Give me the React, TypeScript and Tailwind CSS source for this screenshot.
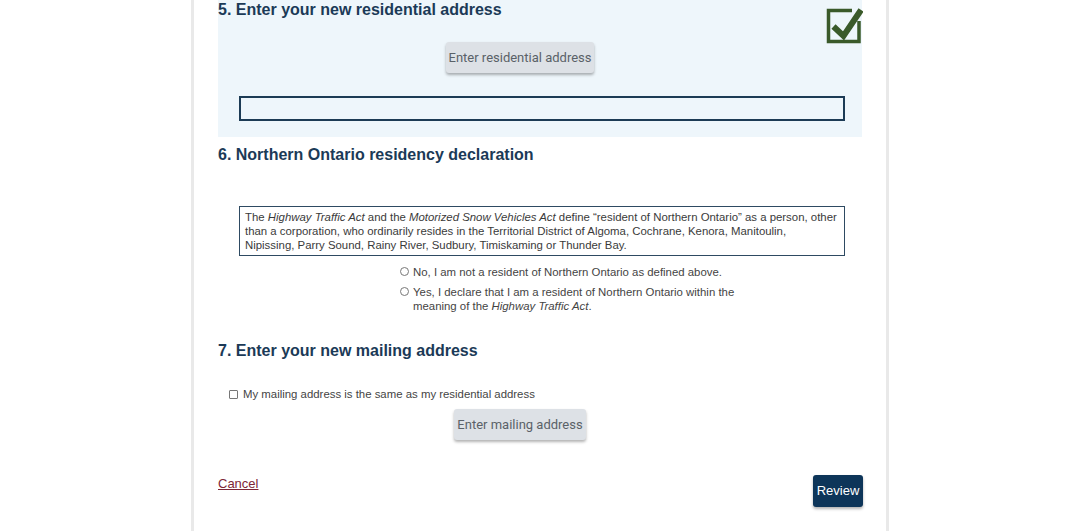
import type { ReactNode } from "react";

const sans = "font-['Liberation_Sans',Arial,sans-serif]";

const Heading = ({ children }: { children: ReactNode }) => (
  <h2 className={`${sans} text-[16px] leading-[20px] font-bold text-[#1b3a57]`}>{children}</h2>
);

const GreyButton = ({ label, className }: { label: string; className: string }) => (
  <button
    className={`${className} h-[31px] rounded-[3px] bg-[#dde1e6] text-[13px] text-[#5a6168] font-['Roboto',sans-serif] shadow-[0_2px_3px_rgba(0,0,0,0.3)]`}
  >
    {label}
  </button>
);

const CheckMark = () => (
  <svg width="38" height="38" viewBox="0 0 38 38" className="shrink-0">
    <path d="M27 3.5H3.5V34.5H34V14" fill="none" stroke="#3a5a2a" strokeWidth="3.5" />
    <path d="M8.5 19.5L18.5 29L36 3" fill="none" stroke="#3a5a2a" strokeWidth="6" strokeLinejoin="miter" />
  </svg>
);

const Radio = ({ children }: { children: ReactNode }) => (
  <label className="flex items-start gap-[4px]">
    <span className="mt-[2px] w-[9px] h-[9px] rounded-full border border-[#777] bg-white shrink-0" />
    <span>{children}</span>
  </label>
);

export default function App() {
  return (
    <div className="w-full h-[531px] bg-white overflow-hidden">
      <div className="mx-auto w-[698px] h-full border-x-[3px] border-[#e9e9e9] pl-[24px] pr-[23px] flex flex-col">
        {/* section 5 */}
        <section className="w-[644px] h-[137px] bg-[#eef6fb] flex flex-col">
          <div className="flex items-start justify-between h-[42px]">
            <Heading>5. Enter your new residential address</Heading>
            <div className="mt-[7px] -mr-[1px]">
              <CheckMark />
            </div>
          </div>
          <GreyButton label="Enter residential address" className="ml-[228px] w-[148px]" />
          <div className="mt-[23px] ml-[21px] w-[606px] h-[25px] border-2 border-[#1c3b55] bg-[#eef6fb]" />
        </section>

        {/* section 6 */}
        <div className="mt-[8px]">
          <Heading>6. Northern Ontario residency declaration</Heading>
        </div>
        <div
          className={`${sans} mt-[41px] ml-[21px] w-[606px] border border-[#2e4a62] px-[5px] py-[3px] text-[11.4px] leading-[14px] text-[#3a3a3a]`}
        >
          The <i>Highway Traffic Act</i> and the <i>Motorized Snow Vehicles Act</i> define “resident of Northern
          Ontario” as a person, other than a corporation, who ordinarily resides in the Territorial District of
          Algoma, Cochrane, Kenora, Manitoulin,
          <br />
          Nipissing, Parry Sound, Rainy River, Sudbury, Timiskaming or Thunder Bay.
        </div>
        <div className={`${sans} ml-[182px] mt-[9px] w-[345px] flex flex-col gap-[6px] text-[11.4px] leading-[14px] text-[#444]`}>
          <Radio>No, I am not a resident of Northern Ontario as defined above.</Radio>
          <Radio>
            Yes, I declare that I am a resident of Northern Ontario within the meaning of the{" "}
            <i>Highway Traffic Act</i>.
          </Radio>
        </div>

        {/* section 7 */}
        <div className="mt-[28px]">
          <Heading>7. Enter your new mailing address</Heading>
        </div>
        <label className={`${sans} mt-[26px] ml-[11px] flex items-center gap-[5px] text-[11.4px] leading-[14px] text-[#444]`}>
          <span className="w-[9px] h-[9px] border border-[#777] rounded-[1px] bg-white" />
          My mailing address is the same as my residential address
        </label>
        <GreyButton label="Enter mailing address" className="mt-[8px] ml-[236px] w-[132px]" />

        {/* actions */}
        <div className="mt-[35px] flex items-start justify-between">
          <a href="#" className={`${sans} mt-[1px] text-[13px] leading-[16px] text-[#7d2637] underline`}>
            Cancel
          </a>
          <button
            className={`${sans} w-[50px] h-[32px] rounded-[3px] bg-[#0d3559] text-white text-[13px] shadow-[0_2px_3px_rgba(0,0,0,0.3)]`}
          >
            Review
          </button>
        </div>
      </div>
    </div>
  );
}
